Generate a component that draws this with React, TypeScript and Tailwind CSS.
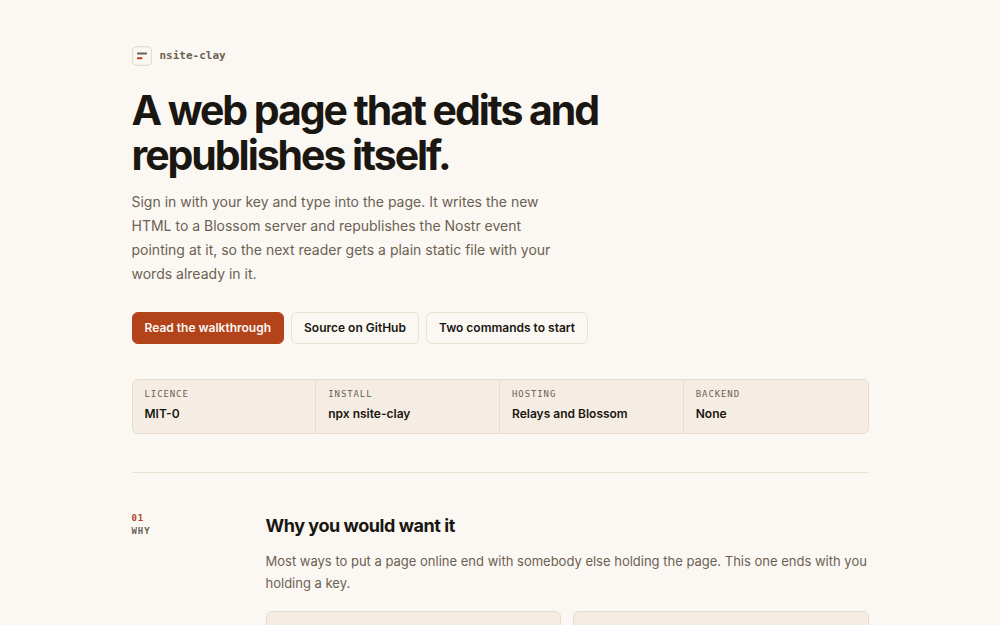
const facts = [
  { label: "Licence", value: "MIT-0" },
  { label: "Install", value: "npx nsite-clay" },
  { label: "Hosting", value: "Relays and Blossom" },
  { label: "Backend", value: "None" },
];

const mono = "font-['DejaVu_Sans_Mono',monospace]";

function Logo() {
  return (
    <svg width="20" height="20" viewBox="0 0 20 20" fill="none" aria-hidden="true">
      <rect x="0.6" y="0.6" width="18.8" height="18.8" rx="4.4" stroke="#e6ddcb" strokeWidth="1.2" />
      <rect x="5" y="6.4" width="10" height="2" rx="0.6" fill="#6b6152" />
      <rect x="5" y="11.2" width="5.4" height="2" rx="0.6" fill="#b5421a" />
    </svg>
  );
}

function Action({ href, primary = false, children }: { href: string; primary?: boolean; children: string }) {
  return (
    <a
      href={href}
      className={`rounded-md border px-3 py-1.5 text-xs leading-[18px] font-semibold ${
        primary
          ? "border-[#b3431b] bg-[#b3431b] text-[#fbf8f3]"
          : "border-[#e9e2d2] text-[#1a1612] hover:border-[#b3431b]"
      }`}
    >
      {children}
    </a>
  );
}

export default function App() {
  return (
    <div className="min-h-screen bg-[#fbf8f3] px-6 font-['Inter',sans-serif] text-[#1a1612]">
      <div className="mx-auto max-w-[737px]">
        <header className="border-b border-[#e9e2d2] pt-[46px] pb-[38px]">
          <div className={`flex items-center gap-2 text-[11px] font-bold text-[#6b6152] ${mono}`}>
            <Logo />
            nsite-clay
          </div>

          <h1 className="mt-[22px] max-w-[500px] text-[41px] leading-[45px] font-bold tracking-tighter">
            A web page that edits and republishes itself.
          </h1>
          <p className="mt-3 max-w-[440px] text-sm leading-[24px] text-[#6b6152]">
            Sign in with your key and type into the page. It writes the new HTML to a Blossom server and
            republishes the Nostr event pointing at it, so the next reader gets a plain static file with your
            words already in it.
          </p>

          <div className="mt-[26px] flex flex-wrap gap-[7px]">
            <Action href="#walkthrough" primary>Read the walkthrough</Action>
            <Action href="#source">Source on GitHub</Action>
            <Action href="#start">Two commands to start</Action>
          </div>

          <dl className="mt-[35px] grid grid-cols-4 divide-x divide-[#e6ddcb] rounded-md border border-[#e6ddcb] bg-[#f5ede3]">
            {facts.map((fact) => (
              <div key={fact.label} className="px-3 pt-2 pb-2.5">
                <dt className={`text-[9px] leading-[13px] tracking-widest text-[#6b6152] uppercase ${mono}`}>
                  {fact.label}
                </dt>
                <dd className="mt-1 text-xs leading-[18px] font-semibold">{fact.value}</dd>
              </div>
            ))}
          </dl>
        </header>

        <section className="grid grid-cols-[110px_1fr] gap-6 pt-[39px]">
          <div className={`text-[9px] leading-[13px] font-bold tracking-widest text-[#6b6152] uppercase ${mono}`}>
            <div className="text-[#b3431b]">01</div>
            <div>Why</div>
          </div>
          <div>
            <h2 className="text-lg leading-[28px] font-bold tracking-tight">Why you would want it</h2>
            <p className="mt-2.5 text-[13px] leading-[22px] text-[#6b6152]">
              Most ways to put a page online end with somebody else holding the page. This one ends with you
              holding a key.
            </p>
            <div className="mt-[17px] grid grid-cols-2 gap-3">
              <div className="h-24 rounded-md border border-[#e6ddcb] bg-[#f5ede3]" />
              <div className="h-24 rounded-md border border-[#e6ddcb] bg-[#f5ede3]" />
            </div>
          </div>
        </section>
      </div>
    </div>
  );
}
